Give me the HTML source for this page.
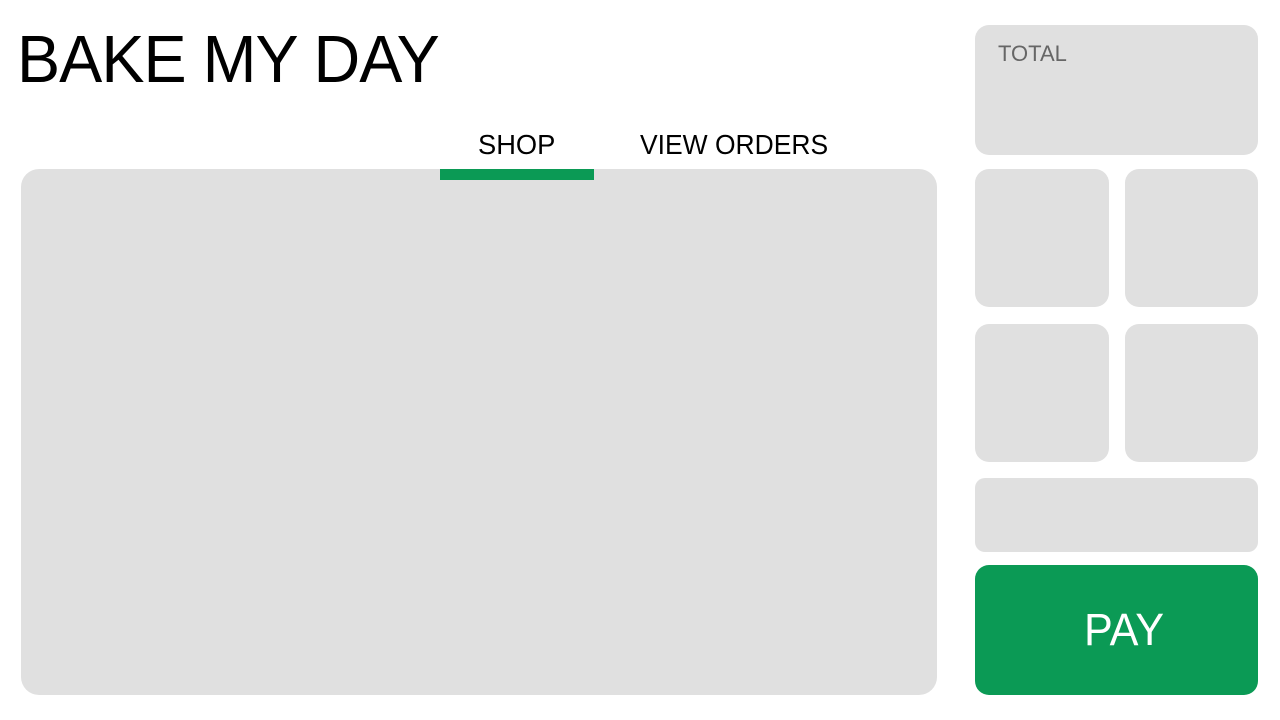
<!DOCTYPE html>
<html><head><style>
body{margin:0;width:1280px;height:720px;background:#fff;font-family:"Liberation Sans",sans-serif;position:relative;overflow:hidden}
.b{position:absolute;background:#e0e0e0;border-radius:14px}
.t{position:absolute;white-space:nowrap;transform-origin:0 0}
</style></head><body>
<div class="t" style="left:17px;top:21px;font-size:67px;letter-spacing:-1px;color:#000;transform:scaleX(0.965)">BAKE MY DAY</div>
<div class="t" style="left:478px;top:129px;font-size:28px;color:#000;transform:scaleX(0.975)">SHOP</div>
<div class="t" style="left:640px;top:129px;font-size:28px;color:#000;transform:scaleX(0.945)">VIEW ORDERS</div>
<div class="b" style="left:21px;top:169px;width:916px;height:526px;border-radius:18px"></div>
<div style="position:absolute;left:440px;top:169px;width:154px;height:11px;background:#0b9a55"></div>
<div class="b" style="left:975px;top:25px;width:283px;height:130px"></div>
<div class="t" style="left:998px;top:41px;font-size:22px;color:#666">TOTAL</div>
<div class="b" style="left:975px;top:169px;width:134px;height:138px"></div>
<div class="b" style="left:1125px;top:169px;width:133px;height:138px"></div>
<div class="b" style="left:975px;top:324px;width:134px;height:138px"></div>
<div class="b" style="left:1125px;top:324px;width:133px;height:138px"></div>
<div class="b" style="left:975px;top:478px;width:283px;height:74px;border-radius:10px"></div>
<div class="b" style="left:975px;top:565px;width:283px;height:130px;background:#0b9a55"></div>
<div class="t" style="left:1084px;top:604px;font-size:45px;color:#fff;transform:scaleX(0.96)">PAY</div>
</body></html>
